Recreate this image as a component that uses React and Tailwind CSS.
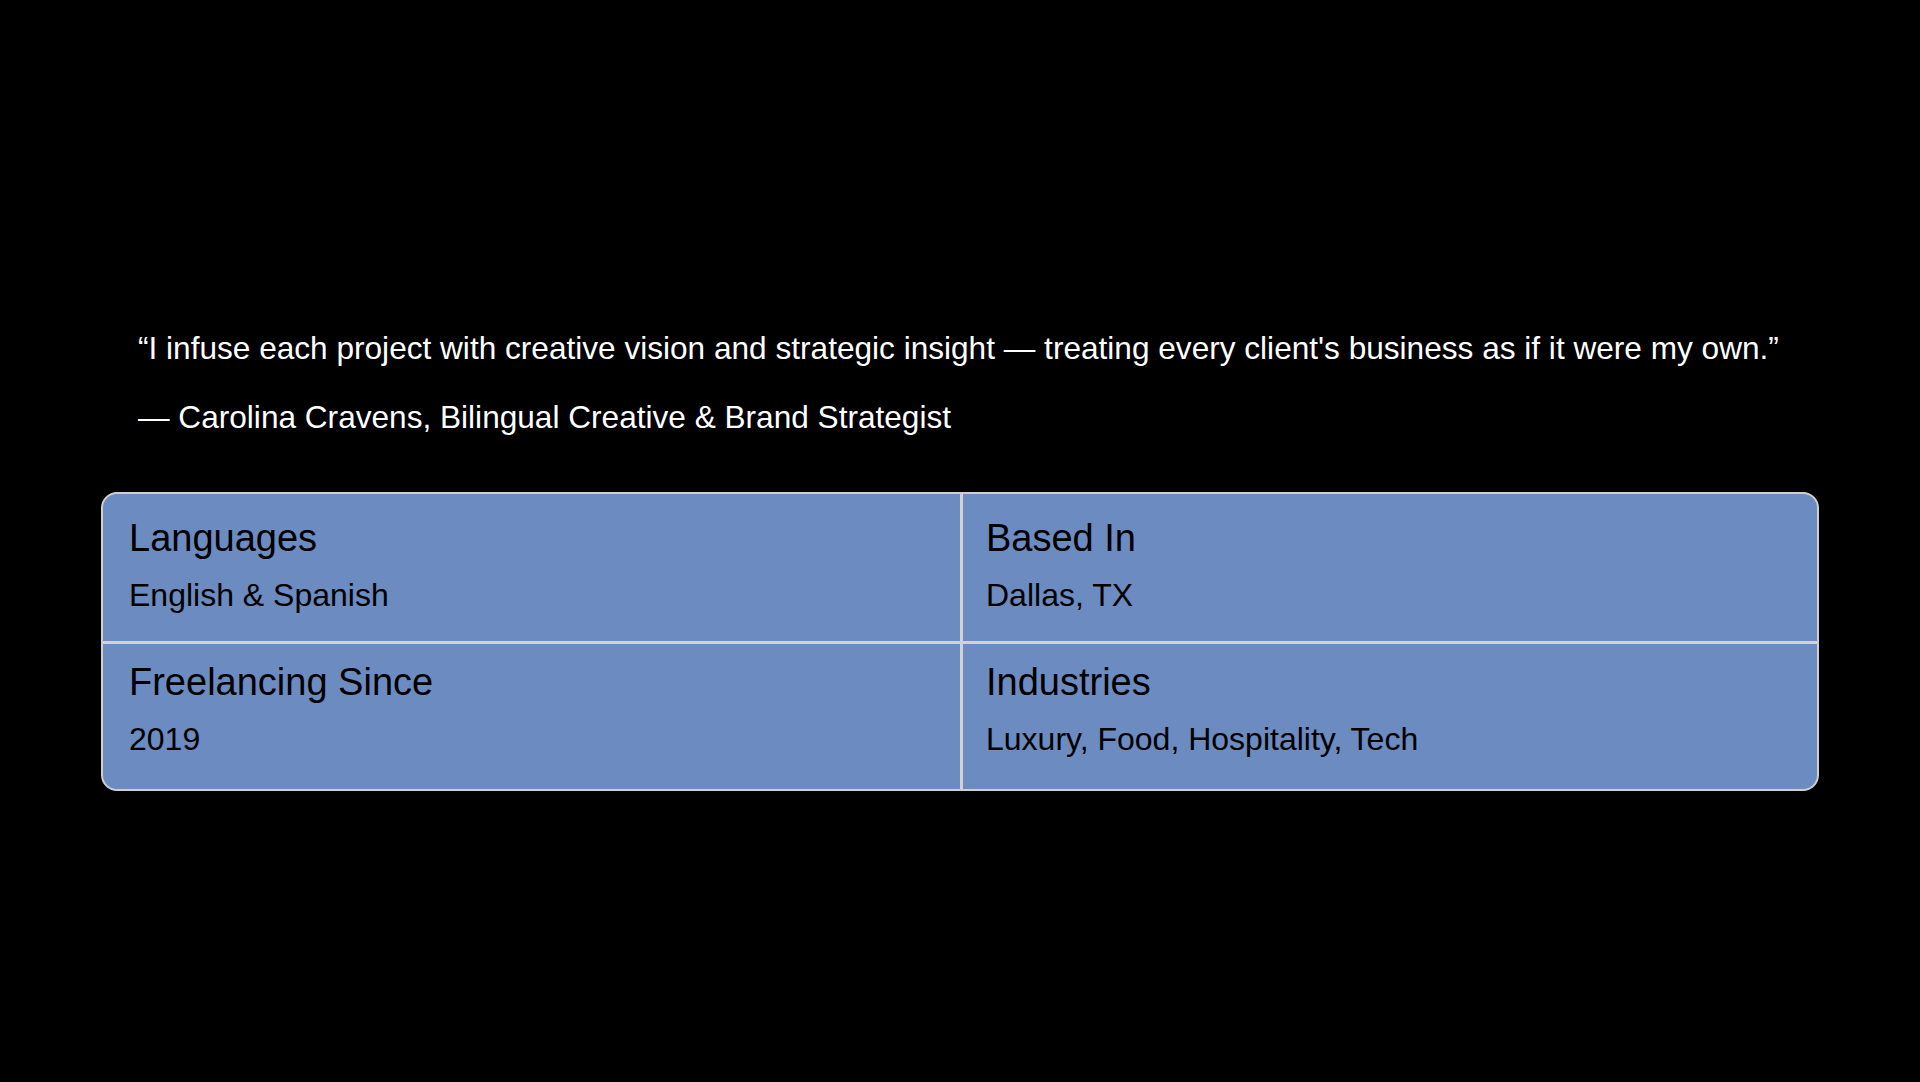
export default function App() {
  const rows = [
    [
      { label: "Languages", value: "English & Spanish" },
      { label: "Based In", value: "Dallas, TX" },
    ],
    [
      { label: "Freelancing Since", value: "2019" },
      { label: "Industries", value: "Luxury, Food, Hospitality, Tech" },
    ],
  ];

  return (
    <div
      className="min-h-screen w-full bg-black pt-[330px]"
      style={{ fontFamily: '"Liberation Sans", Arial, sans-serif' }}
    >
      <div className="mx-auto w-[1718px]">
        <div className="pl-[37px] text-white">
          <p className="text-[31.6px] leading-[36px]">
            “I infuse each project with creative vision and strategic insight — treating every client's business as if it were my own.”
          </p>
          <p className="mt-[33px] text-[31.6px] leading-[36px]">
            — Carolina Cravens, Bilingual Creative &amp; Brand Strategist
          </p>
        </div>

        <div className="mt-[57px] overflow-hidden rounded-[16px] border-2 border-[#cfcfcf] bg-[#6b8bc1] text-black">
          <div className="grid grid-cols-2">
            {rows[0].map((item, i) => (
              <div
                key={item.label}
                className={
                  i === 1
                    ? "h-[150px] border-b-[3px] border-l-[3px] border-[#d2d2d2] px-[23px] pt-[22px]"
                    : "h-[150px] border-b-[3px] border-[#d2d2d2] px-[26px] pt-[22px]"
                }
              >
                <div className="text-[38px] leading-[44px]">{item.label}</div>
                <div className="mt-[17px] text-[32px] leading-[36px]">{item.value}</div>
              </div>
            ))}
            {rows[1].map((item, i) => (
              <div
                key={item.label}
                className={
                  i === 1
                    ? "h-[145px] border-l-[3px] border-[#d2d2d2] px-[23px] pt-[16px]"
                    : "h-[145px] px-[26px] pt-[16px]"
                }
              >
                <div className="text-[38px] leading-[44px]">{item.label}</div>
                <div className="mt-[17px] text-[32px] leading-[36px]">{item.value}</div>
              </div>
            ))}
          </div>
        </div>
      </div>
    </div>
  );
}
